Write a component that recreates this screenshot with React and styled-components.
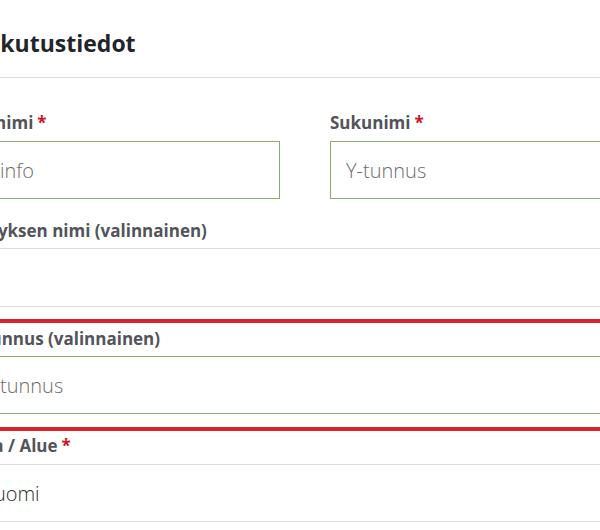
import styled, { createGlobalStyle } from "styled-components";

const GlobalStyle = createGlobalStyle`
  html, body {
    margin: 0;
    padding: 0;
    background: #ffffff;
    overflow: hidden;
  }
  body {
    font-family: "Open Sans", "Liberation Sans", sans-serif;
  }
`;

const Form = styled.div`
  width: 676px;
  margin-left: -33px;
`;

const Header = styled.div`
  padding: 28px 0 19px;
  border-bottom: 1px solid #dedede;
`;

const Title = styled.h3`
  margin: 0 0 0 -5px;
  font-size: 23px;
  line-height: 30px;
  font-weight: 700;
  color: #21252b;
`;

const Fields = styled.div`
  padding-top: 34px;
`;

const Row = styled.div`
  display: grid;
  grid-template-columns: ${(p) => (p.$half ? "1fr 1fr" : "1fr")};
  column-gap: 50px;
  margin-top: ${(p) => p.$top || 0}px;
`;

const Marked = styled.div`
  margin-top: 12px;
  padding: 5px 0 13px;
  border-top: 4px solid #d8222e;
  border-bottom: 4px solid #d8222e;
`;

const Field = styled.div`
  display: flex;
  flex-direction: column;
`;

const Label = styled.label`
  font-size: 17px;
  line-height: 22px;
  font-weight: 700;
  color: #52545a;
  margin-bottom: ${(p) => p.$gap || 7}px;
  white-space: nowrap;
`;

const Req = styled.span`
  color: #d0131f;
  margin-left: 4px;
`;

const Input = styled.input`
  box-sizing: border-box;
  width: 100%;
  height: ${(p) => p.$h || 58}px;
  margin: 0;
  padding: 0 15px;
  border: 1px solid ${(p) => (p.$green ? "#8aab6d" : "#dcdcdc")};
  border-radius: 0;
  background: #ffffff;
  font-family: "Open Sans", "Liberation Sans", sans-serif;
  font-size: 20px;
  font-weight: 300;
  color: #333333;
  outline: none;

  &::placeholder {
    color: #6c6c6c;
    opacity: 1;
  }
`;

const Select = styled.div`
  box-sizing: border-box;
  height: 58px;
  padding: 0 15px;
  display: flex;
  align-items: center;
  border: 1px solid #dcdcdc;
  font-size: 20px;
  font-weight: 300;
  color: #2c2c2c;
`;

export default function App() {
  return (
    <>
      <GlobalStyle />
      <Form>
        <Header>
          <Title>Laskutustiedot</Title>
        </Header>
        <Fields>
          <Row $half>
            <Field>
              <Label>
                Etunimi<Req>*</Req>
              </Label>
              <Input $green placeholder="Y-info" />
            </Field>
            <Field>
              <Label>
                Sukunimi<Req>*</Req>
              </Label>
              <Input $green placeholder="Y-tunnus" />
            </Field>
          </Row>
          <Row $top={21}>
            <Field>
              <Label $gap={6}>Yrityksen nimi (valinnainen)</Label>
              <Input $h={59} />
            </Field>
          </Row>
          <Marked>
            <Field>
              <Label $gap={6}>Y-tunnus (valinnainen)</Label>
              <Input $green placeholder="Y-tunnus" />
            </Field>
          </Marked>
          <Row $top={4}>
            <Field>
              <Label>
                Maa / Alue<Req>*</Req>
              </Label>
              <Select>Suomi</Select>
            </Field>
          </Row>
        </Fields>
      </Form>
    </>
  );
}
